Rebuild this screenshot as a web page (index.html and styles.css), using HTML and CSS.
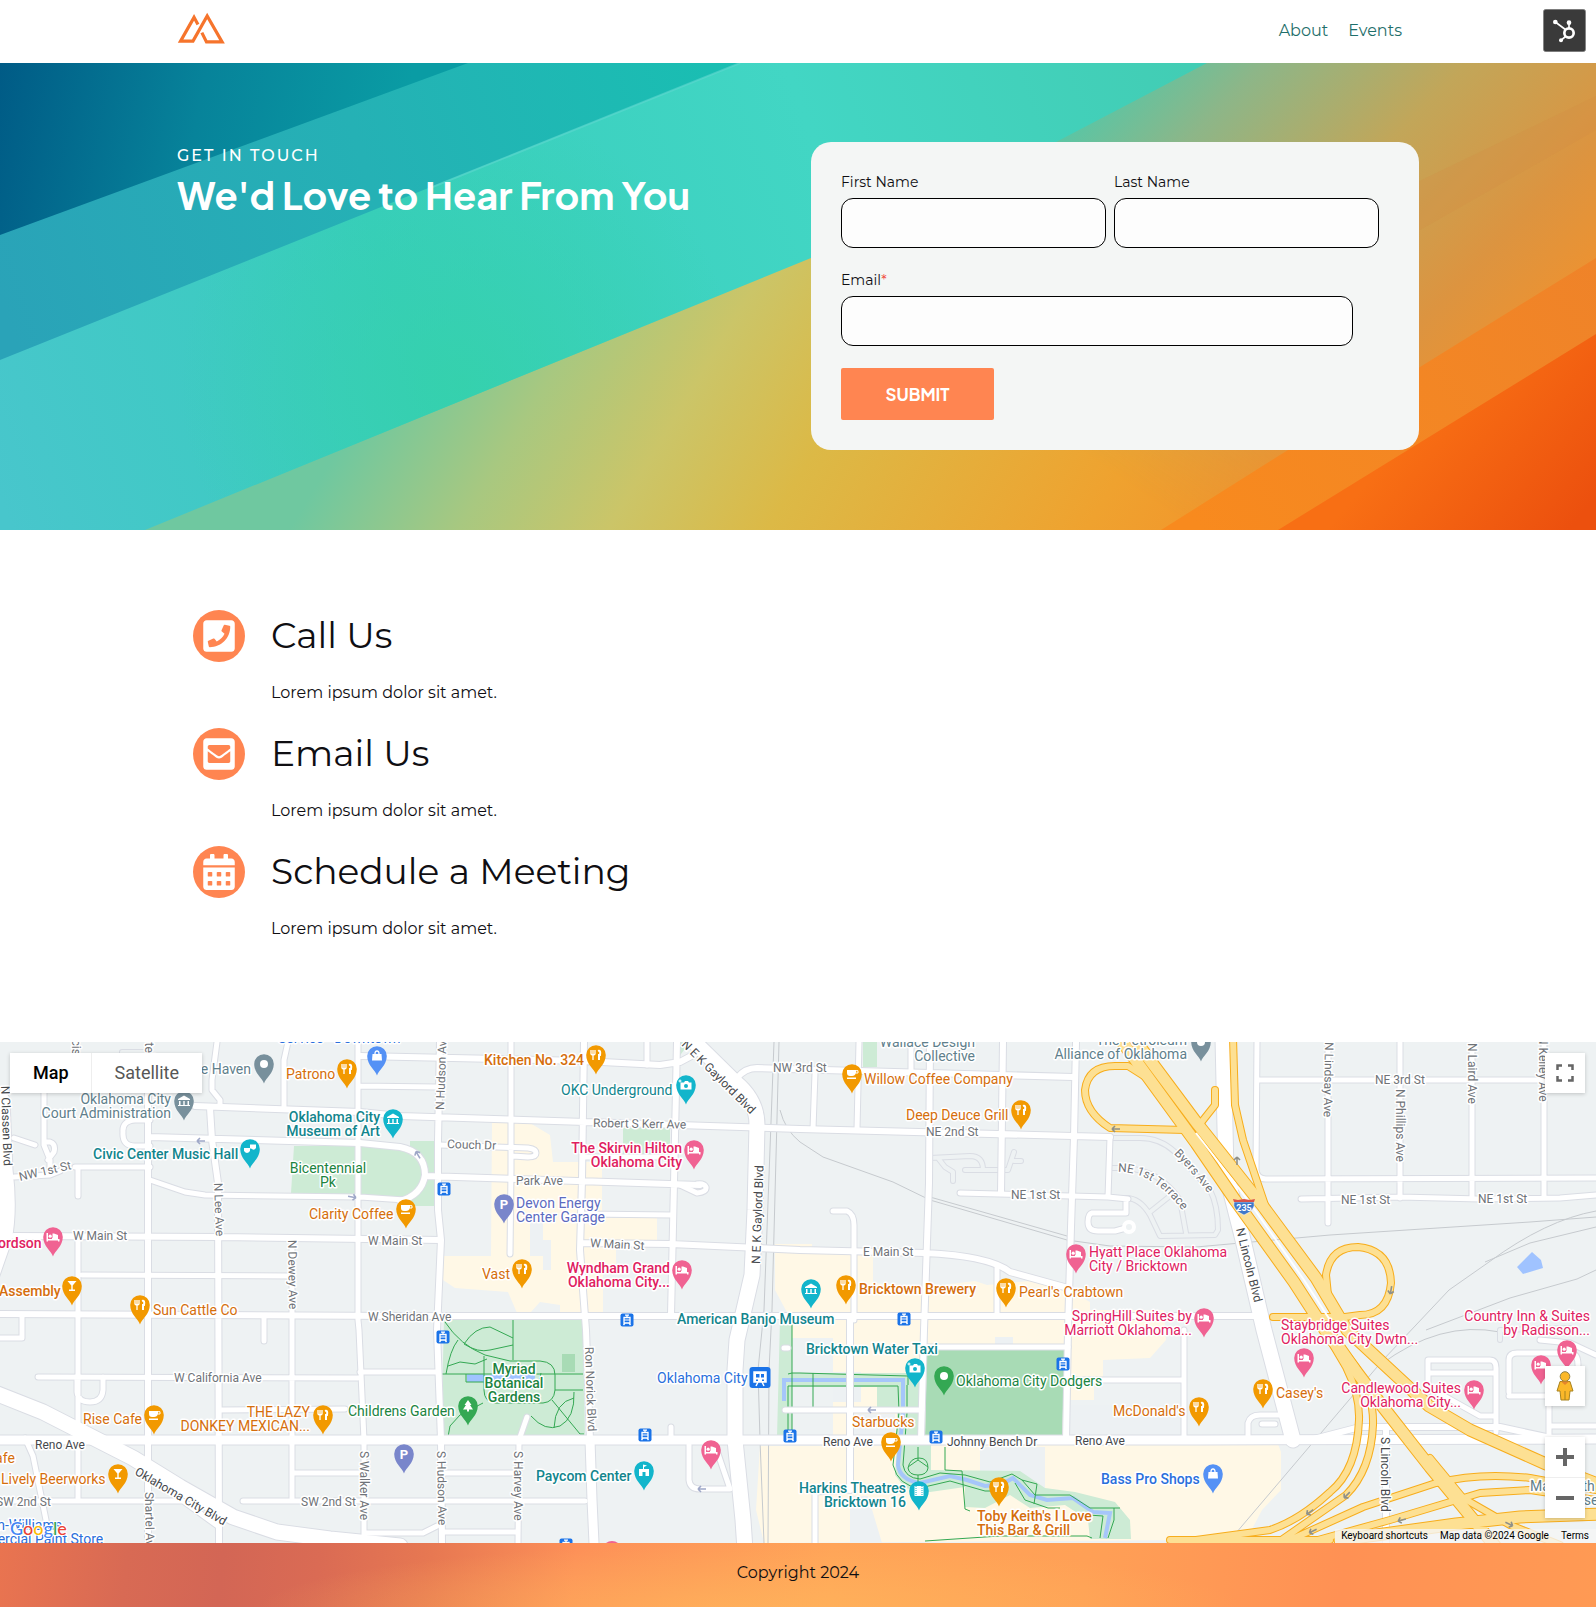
FILE: index.html
```html
<!DOCTYPE html>
<html lang="en">
<head>
<meta charset="utf-8">
<meta name="viewport" content="width=device-width, initial-scale=1">
<title>Contact</title>
<link rel="stylesheet" href="styles.css">
</head>
<body>
<header class="site-header">
  <div class="container header-row">
    <a class="logo" href="#" aria-label="Home">
      <svg width="49" height="34" viewBox="46 38 138 94"><path d="M105 75 94 55 56 122H91L131 51 173 124H129L116 98" fill="none" stroke="#f6742c" stroke-width="9"/></svg>
    </a>
    <nav class="nav"><a href="#">About</a><a href="#">Events</a></nav>
  </div>
  <button class="sprocket" type="button" aria-label="HubSpot menu">
    <svg width="43" height="43" viewBox="907 28 129 129"><rect x="908" y="29" width="127" height="127" rx="8" fill="#3a3a3a" stroke="#8c8c8c" stroke-width="2"/><g fill="none" stroke="#fff" stroke-width="5"><circle cx="985" cy="100" r="14" stroke-width="8"/><path d="M944 67 976 91M985 70V88M961 122 976 109"/></g><g fill="#fff"><circle cx="944" cy="67" r="7"/><circle cx="985" cy="69" r="7"/><circle cx="961" cy="122" r="6"/></g></svg>
  </button>
</header>

<main>
<section class="hero">
  <svg class="hero-art" viewBox="0 63 1596 467" preserveAspectRatio="none" aria-hidden="true">
    <defs>
      <linearGradient id="h3" gradientUnits="userSpaceOnUse" x1="500" y1="180" x2="1230" y2="620"><stop offset="0" stop-color="#6fc8a0"/><stop offset=".17" stop-color="#a8c880"/><stop offset=".32" stop-color="#cbc568"/><stop offset=".48" stop-color="#dcb946"/><stop offset=".8" stop-color="#efa22f"/><stop offset="1" stop-color="#f3912a"/></linearGradient>
      <linearGradient id="h3b" gradientUnits="userSpaceOnUse" x1="1130" y1="60" x2="1480" y2="400"><stop offset="0" stop-color="#58c6a6"/><stop offset=".2" stop-color="#8db688"/><stop offset=".5" stop-color="#c2a659"/><stop offset=".8" stop-color="#dc9440"/><stop offset="1" stop-color="#ee9230"/></linearGradient>
      <linearGradient id="h3m" gradientUnits="userSpaceOnUse" x1="1080" y1="450" x2="1220" y2="250"><stop offset="0" stop-color="#fff" stop-opacity="0"/><stop offset="1" stop-color="#fff"/></linearGradient>
      <mask id="hm" maskUnits="userSpaceOnUse" x="0" y="63" width="1596" height="467"><rect y="63" width="1596" height="467" fill="url(#h3m)"/></mask>
      <linearGradient id="h2" gradientUnits="userSpaceOnUse" x1="0" y1="500" x2="1190" y2="63"><stop offset="0" stop-color="#48c6cc"/><stop offset=".35" stop-color="#38cdbd"/><stop offset=".7" stop-color="#42d6c4"/><stop offset="1" stop-color="#42cdb4"/></linearGradient>
      <radialGradient id="h2g" gradientUnits="userSpaceOnUse" cx="460" cy="385" r="280"><stop offset="0" stop-color="#34d2a8" stop-opacity=".75"/><stop offset="1" stop-color="#34d2a8" stop-opacity="0"/></radialGradient>
      <linearGradient id="h1" gradientUnits="userSpaceOnUse" x1="0" y1="300" x2="740" y2="63"><stop offset="0" stop-color="#2aa3b8"/><stop offset=".5" stop-color="#25b1b5"/><stop offset="1" stop-color="#19bfb2"/></linearGradient>
      <linearGradient id="h0" gradientUnits="userSpaceOnUse" x1="0" y1="63" x2="400" y2="140"><stop offset="0" stop-color="#005b86"/><stop offset=".5" stop-color="#07839a"/><stop offset="1" stop-color="#0a9ca4"/></linearGradient>
      <linearGradient id="h4" gradientUnits="userSpaceOnUse" x1="1596" y1="260" x2="1200" y2="530"><stop offset="0" stop-color="#ef8329"/><stop offset="1" stop-color="#f88a1e"/></linearGradient>
      <linearGradient id="h5" gradientUnits="userSpaceOnUse" x1="1420" y1="420" x2="1560" y2="540"><stop offset="0" stop-color="#f86f14"/><stop offset="1" stop-color="#ec500e"/></linearGradient>
    </defs>
    <path d="M0 63H1596V530H0z" fill="url(#h3)"/>
    <path d="M0 63H1596V530H0z" fill="url(#h3b)" mask="url(#hm)"/>
    <path d="M1596 96 1380 200 1420 230 1596 130z" fill="#d48a44" opacity=".25"/>
    <path d="M0 63H1207L1056 142 811 258 480 393 145 530H0z" fill="url(#h2)"/>
    <path d="M0 63H1207L1056 142 811 258 480 393 145 530H0z" fill="url(#h2g)"/>
    <path d="M0 63H740L0 360z" fill="url(#h1)"/>
    <path d="M740 63 430 188" stroke="#5fd8d0" stroke-width="2" opacity=".6"/>
    <path d="M0 63H468L0 235z" fill="url(#h0)"/>
    <path d="M1161 530 1288 450 1420 367 1596 258V530z" fill="url(#h4)"/>
    <path d="M1278 530 1596 334V530z" fill="url(#h5)"/>
  </svg>
  <div class="container hero-grid">
    <div>
      <p class="eyebrow">GET IN TOUCH</p>
      <h1>We'd Love to Hear From You</h1>
    </div>
    <form class="card">
      <div class="name-row">
        <div class="field"><label for="first">First Name</label><input id="first" type="text"></div>
        <div class="field"><label for="last">Last Name</label><input id="last" type="text"></div>
      </div>
      <div class="field email"><label for="email">Email<span class="req">*</span></label><input id="email" type="email"></div>
      <button class="submit" type="submit">SUBMIT</button>
    </form>
  </div>
</section>

<section class="container contact">
  <article class="item">
    <span class="badge"><svg width="32" height="36" viewBox="0 0 448 512"><path fill="#fff" d="M400 32H48C21.49 32 0 53.49 0 80v352c0 26.51 21.49 48 48 48h352c26.51 0 48-21.49 48-48V80c0-26.51-21.49-48-48-48zM94 416c-7.033 0-13.057-4.873-14.616-11.627l-14.998-65a15 15 0 0 1 8.707-17.16l69.998-29.999a15 15 0 0 1 17.518 4.289l30.997 37.885c48.944-22.963 88.297-62.858 110.781-110.78l-37.886-30.997a15.001 15.001 0 0 1-4.289-17.518l30-69.998a15 15 0 0 1 17.16-8.707l65 14.998A14.997 14.997 0 0 1 384 126c0 160.292-129.945 290-290 290z"/></svg></span>
    <h2>Call Us</h2><p>Lorem ipsum dolor sit amet.</p>
  </article>
  <article class="item">
    <span class="badge"><svg width="32" height="36" viewBox="0 0 448 512"><path fill="#fff" d="M400 32H48C21.49 32 0 53.49 0 80v352c0 26.51 21.49 48 48 48h352c26.51 0 48-21.49 48-48V80c0-26.51-21.49-48-48-48zM178.117 262.104C87.429 196.287 88.353 196.121 64 177.167V152c0-13.255 10.745-24 24-24h272c13.255 0 24 10.745 24 24v25.167c-24.371 18.969-23.434 19.124-114.117 84.938-10.5 7.655-31.392 26.12-45.883 25.894-14.503.218-35.367-18.227-45.883-25.895zM384 217.775V360c0 13.255-10.745 24-24 24H88c-13.255 0-24-10.745-24-24V217.775c13.958 10.794 33.329 25.236 95.303 70.214 14.162 10.341 37.975 32.145 64.694 32.01 26.887.134 51.037-22.041 64.72-32.025 61.958-44.964 81.325-59.406 95.283-70.199z"/></svg></span>
    <h2>Email Us</h2><p>Lorem ipsum dolor sit amet.</p>
  </article>
  <article class="item">
    <span class="badge"><svg width="32" height="36" viewBox="0 0 448 512"><path fill="#fff" d="M0 464c0 26.500 21.500 48 48 48h352c26.500 0 48-21.500 48-48V192H0v272zM400 64h-48V16c0-8.800-7.200-16-16-16h-32c-8.800 0-16 7.200-16 16v48H160V16c0-8.800-7.200-16-16-16h-32c-8.800 0-16 7.200-16 16v48H48C21.500 64 0 85.500 0 112v48h448v-48c0-26.500-21.500-48-48-48z"/><g fill="#ff8551"><rect x="64" y="256" width="64" height="64" rx="12"/><rect x="192" y="256" width="64" height="64" rx="12"/><rect x="320" y="256" width="64" height="64" rx="12"/><rect x="64" y="384" width="64" height="64" rx="12"/><rect x="192" y="384" width="64" height="64" rx="12"/><rect x="320" y="384" width="64" height="64" rx="12"/></g></svg></span>
    <h2>Schedule a Meeting</h2><p>Lorem ipsum dolor sit amet.</p>
  </article>
</section>

<section class="map" aria-label="Map">
<svg class="map-canvas" viewBox="0 2 1596 501" preserveAspectRatio="xMidYMid slice">
  <defs>
    <path id="pin" d="M0 19.500C-1.500 14-9.800 9.500-9.800 0A9.800 9.800 0 0 1 9.800 0C9.800 9.500 1.500 14 0 19.500z"/>
    <g id="g-food" stroke="#fff" fill="none" stroke-width="1.300"><path d="M-5-5V-1Q-3 1-1-1V-5M-3-5V5"/><path d="M2-4Q5-5 4 0H3V5" stroke-width="2"/></g>
    <g id="g-bed" fill="#fff"><path d="M-6.500-4h1.500V2H5V-2L1-3.500H-.5V1H-1V3.500h-4V4.500h-1.500zM5 2h1.500V4.500H5zM-5 2H6v1.500H-5z"/><circle cx="-2.800" cy="-.8" r="1.600"/></g>
    <g id="g-cup"><path d="M-5-4H4V-1Q3 2 0 2H-2Q-5 2-5-1zM-5 3.500H4V5H-5z" fill="#fff"/><path d="M3-3.300H6V-1H4" fill="none" stroke="#fff"/></g>
    <g id="g-bar"><path d="M-4.500-5H4.500L.7-.5V3.500H3V5H-3V3.500H-.7V-.5z" fill="#fff"/></g>
    <g id="g-cam"><path d="M-5.500-2.500H-2L-1-4H2L3-2.500H5.500V4.500H-5.500z" fill="#fff"/><circle cy="1" r="2" fill="#12b5cb"/><path d="M-6-5.500v3M-7.500-4h3" stroke="#fff"/></g>
    <g id="g-mus" fill="#fff"><path d="M0-5.500 6-2V-1H-6V-2zM-5 0H-3.500V4H-5zM-.7 0H.7V4H-.7zM3.500 0H5V4H3.500zM-6 4H6V5H-6z"/></g>
    <g id="g-bag"><path d="M-4.500-2H4.500L5 4.500H-5z" fill="#fff"/><path d="M-2-2Q-2-5 0-5T2-2" fill="none" stroke="#fff" stroke-width="1.300"/></g>
    <g id="g-mask" fill="#fff"><path d="M-6-1H0V2Q-3 6-6 2zM0-4.500H6V-1Q4 2 1-.5H0z"/></g>
    <g id="g-tree" fill="#fff"><path d="M0-6 3.500-1H2L5 3.500H1V5.500H-1V3.500H-5L-2-1H-3.500z"/></g>
    <g id="g-film"><rect x="-4.500" y="-5" width="9" height="10" fill="#fff"/><path d="M-3-5V5M3-5V5" stroke="#12b5cb" stroke-dasharray="1 1"/></g>
    <g id="g-tower" fill="#fff"><path d="M-5-2H-1V-6.500L3-5.500 0-4V-2H5V5H1.500V1H-1.500V5H-5z"/></g>
    <g id="tram"><rect x="-6.500" y="-6.500" width="13" height="13" rx="2" fill="#1a73e8"/><path d="M-3-2.500H3V3H-3zM0-5V-2M-3.500 5-2 3M3.500 5 2 3M-2-4.800H2" fill="none" stroke="#fff" stroke-width="1.300"/><path d="M-3 0H3" stroke="#fff"/></g>
    <g id="arr"><path d="M-4 0H4M-4 0-1-3M-4 0-1 3" fill="none" stroke-width="1.600"/></g>

    <path id="r-minor" d="M1112 98H1140Q1160 98 1175 112L1210 150Q1218 165 1218 190L1215 195 1160 196 1150 175Q1140 158 1126 158M1110 128H1125Q1160 130 1180 160L1186 193M1150 172 1170 156M930 118 970 116Q983 116 983 130M965 130H1008L1014 112M938 118 945 127 953 132V141M1014 121h7M1500 300V290L1570 288M122 25V12H148"/>
    <path id="r-small" d="M44 50V105L50 120V130M44 102H50Q56 104 54 112L48 120M217 2 212 40V50L220 60V66M288 2 284 20V66M292 200V458M358 2V280L359 290 364 400V503M78 127V156M78 196V458M22 275V298H0M264 276V301M150 80H135Q122 81 123 92 122 106 135 106H150M75 127H150M14 137 50 135 60 131M150 140 185 152 205 155 360 157 405 160M82 235 292 236M38 337 358 338M77 337V352Q78 362 90 362 102 362 103 350V337M220 370 345 369M292 433H362M243 461H585M0 461H183L219 487M364 493H423L437 486M443 492H517M25 398 33 416 46 480 49 503M14 98 35 105M511 2V130L510 214M358 46 437 47M440 105 528 108Q536 109 536 113 536 117 528 117L513 116M585 117H674M585 174 672 175M680 145 697 153Q707 152 706 147 704 143 697 144M647 2V25M815 33 813 89M859 2 857 89M911 2V30M1110 97 1108 157M960 153 1108 157 1128 159M1126 159V173H1092Q1088 174 1088 182 1088 191 1098 191H1115L1126 188M833 171H847Q854 174 854 185V280M997 228V276M925 307H1068M1068 340H1184M785 370H922M1184 290V400M1257 2 1256 130Q1257 139 1266 139L1596 138M1258 40H1560M1328 2V183M1400 2V158M1472 2V158M1544 2V157M1301 159 1400 157 1480 159 1560 158 1596 155M1428 352V320H1490Q1496 320 1496 328V392M1428 333H1494M1428 347 1480 376H1496M1509 352V320Q1509 313 1517 313H1570Q1578 313 1578 325M1509 356H1545M1549 360V400M1549 386H1596M1540 300 1570 303 1596 315M1248 395V383Q1250 375 1260 375H1280M1262 384H1275M689 405V440Q690 449 700 449H730M715 405 730 449M671 387V400M527 377 519 400 518 503M443 433H517M815 503V452L848 450M784 308 788 308M360 332H437"/>
    <path id="r-mid" d="M148 20V503M210 68 212 100 218 143 219 503M195 66 360 72 400 76 800 89 1110 97M150 97 360 103 400 107Q425 112 425 135 422 155 400 161M14 196 220 197 441 200M0 274 400 276 1265 276M440 2 438 100V170L441 200 437 290 441 400 442 503M425 136 700 145M581 203 671 204 800 210 925 213Q990 216 1010 232L1068 248M584 2 582 140 580 210 586 290 590 400M677 2 674 143 671 275M360 16 583 21 660 25 680 22 695 14M737 38Q745 28 757 28L1073 37M930 2 929 143 924 290 921 400M1003 2 1001 153M1076 2 1074 97 1071 187 1068 290 1066 400M850 276V450M1310 400 1360 387H1500L1546 397M1386 388V503"/>
    <path id="r-big" d="M0 400H600L1200 400 1596 399M590 400 592 460 594 503"/>
    <path id="r-art" d="M-5 353 43 372 133 418 180 447 233 477 277 492 330 499 400 506M686-6 735 42Q757 60 757 85L755 170 752 235 737 300 735 330V400L743 480 745 510M1223-2 1226 133 1243 200 1264 290 1293 400M2 60 5 130Q10 170 4 200L-10 240"/>
    <path id="w5" d="M1185 90 1110 88Q1085 72 1085 50 1088 26 1115 26H1128L1150 40M1215 50V65L1200 84M1233-2 1235 65 1243 100 1265 165M1328 255 1326 235Q1330 207 1358 207 1390 210 1391 243 1388 275 1360 275L1345 277H1273M1320 283 1346 327Q1360 355 1359 380 1357 430 1330 452 1300 480 1270 490L1196 500M1330 290 1356 327Q1374 355 1373 385 1371 430 1346 455L1280 501M1290 500 1363 467 1436 443Q1480 432 1530 438L1596 450M1300 505 1390 480 1480 453 1530 450 1596 460M1430 418 1463 458 1510 485 1560 505M1170 500H1330"/>
    <path id="w10" d="M1118-4 1196 103 1235 160 1294 242 1325 290 1383 367 1430 427 1495 506M1132-4 1196 82 1262 165 1316 238 1347 290 1429 366 1470 390 1546 424 1600 445M1340 500 1456 484 1520 477 1600 474"/>
    <path id="terrace" d="M1118 132Q1152 131 1182 170"/>
    <path id="byers" d="M1174 114Q1192 132 1212 158"/>
  </defs>

  <rect y="2" width="1596" height="501" fill="#eef2f3"/>
  <g fill="#fff8e6">
    <path d="M492 83H530L550 95 553 122H602V178H657V200L616 204V230H603V272H560V265L540 262 530 273H517L508 252 455 248 443 240V216H491z"/>
    <path d="M775 204H812V213H873V243L925 247 975 241 987 245 1040 240 1068 250 1090 262V270H1164L1166 300 1150 318 1103 320V340L1094 342V360H1069V398H833V280L790 278 775 250z"/>
    <path d="M760 406 1278 404 1281 412V450L1262 470 1250 493 1196 500 764 503 756 470z"/>
    <path d="M792 280H833V298H792z"/>
  </g>
  <g fill="#edf1f3"><path d="M530 178H543V216H530zM543 200h8v30h-8zM980 407H1045V450H985L980 430zM850 456H868L882 503H850zM1069 365H1180V398H1069zM833 332h28v30h-28zM995 297h18v8h-18zM851 374h44v22h-44z"/></g>
  <g fill="#cdebd5"><path d="M294 106H410V101H436V166H405L400 158 291 153zM444 280H583L585 397H441zM623 88H670V116H623zM863 2H877V27H863zM678 2H690L678 18zM780 280H792V397H777zM792 333H905V347H792zM877 333H921V368H877zM897 372H921V397H897zM897 405H931V430L1020 431 1045 448 1075 452 1115 462 1130 480 1131 499H1090L1088 480 1065 465 1030 468 1010 455 985 468 965 467V447L930 452 905 448 895 435z"/></g>
  <path d="M927 310H1065L1062 397H925zM562 314h13v18h-13z" fill="#a8dbb5"/>
  <path d="M1517 227 1532 212 1541 220 1543 228 1523 234zM467 334h16v8h-16zM483 335h52v14h-14v-6h-38z" fill="#a0c3ff"/>
  <path d="M784 361V340H903V373L898 425Q900 440 920 443L950 436 967 440 985 446Q1003 445 1013 438L1030 455 1047 460 1073 458 1093 472 1110 473 1105 498" fill="none" stroke="#a6c6fa" stroke-width="4"/>
  <g class="trail"><path d="M445 282Q460 305 485 315L510 321H540Q555 322 555 335V350Q554 362 543 363H495Q484 362 484 350V316M442 334H583M555 350H583M458 300Q450 310 446 334M464 304Q475 287 490 287L513 298M464 304Q478 313 490 310L513 305M513 280V320M448 326 460 322 475 324 487 319M483 363 460 375 450 386 448 397M531 376Q545 392 560 386 575 378 574 352M552 360 580 394 584 394M554 388Q555 362 574 358M466 334V342H484M529 342Q540 345 541 333"/><path d="M792 281V397M788 334 792 333 800 333 908 336V345M788 397V346H898L899 372 893 425Q898 446 920 448L950 441 985 451H1000M813 333V368M907 345V373L903 425Q905 438 920 439L940 433 965 435 990 442 1012 434 1022 440 1035 455 1070 455 1090 468 1120 468M918 407V420M908 428Q910 418 919 418T928 428Q927 435 918 435T908 428M908 427 918 420 928 427M918 435V450M945 407V430L962 431 965 469 970 471M1022 440 1037 444 1034 464M1015 443 1025 460 1048 468 1060 468M1088 475 1103 476 1100 498M1114 468V480L1108 498M925 501 1000 496H1087L1092 498"/></g>

  <g class="rail"><path d="M780 70Q785 90 800 102L823 117 893 142 930 160 1067 200 1110 206 1196 207 1330 195 1530 182 1596 177M930 157 1067 196M774 2 764 270 758 330 760 400 764 503M779 2 772 270 769 330 768 503M1236 493 1383 320 1449 250 1489 222Q1546 180 1596 171M1426 290 1510 258 1577 239 1596 230M1485 222 1530 203 1596 187M1380 325Q1440 280 1500 292"/></g>

  <use href="#r-minor" class="case" stroke-width="6"/><use href="#r-minor" class="dull" stroke-width="4"/>
  <use href="#r-small" class="case" stroke-width="7"/><use href="#r-mid" class="case" stroke-width="8"/><use href="#r-big" class="case" stroke-width="11"/><use href="#r-art" class="case" stroke-width="17"/>
  <use href="#r-small" class="road" stroke-width="5"/><use href="#r-mid" class="road" stroke-width="6"/><use href="#r-big" class="road" stroke-width="9"/><use href="#r-art" class="road" stroke-width="15"/>
  <circle cx="1129" cy="187" r="5" fill="#eef2f3" stroke="#fff" stroke-width="4"/>
  <use href="#w5" class="hcase" stroke-width="8"/><use href="#w10" class="hcase" stroke-width="13"/><use href="#w5" class="hway" stroke-width="6"/><use href="#w10" class="hway" stroke-width="11"/>
  <path d="M1196 93 1250 163 1304 240 1330 280" fill="none" stroke="#fff" stroke-width="2"/>
  <g stroke="#9fa8c8"><use href="#arr" x="201" y="101"/><use href="#arr" transform="translate(352 157) rotate(190)"/><use href="#arr" transform="translate(418 115) rotate(60)"/><use href="#arr" x="702" y="449"/><use href="#arr" x="872" y="370"/></g>
  <g stroke="#8f9089"><use href="#arr" x="1116" y="89"/><use href="#arr" transform="translate(1237 121) rotate(90)"/><use href="#arr" transform="translate(1391 250) rotate(280)"/><use href="#arr" transform="translate(1310 472) rotate(-35)"/><use href="#arr" transform="translate(1347 455) rotate(-45)"/><use href="#arr" transform="translate(1313 491) rotate(-25)"/><use href="#arr" transform="translate(1402 480) rotate(-15)"/><use href="#arr" transform="translate(1509 484) rotate(205)"/></g>

  <g class="st">
    <text x="20" y="141" transform="rotate(-13 20 141)">NW 1st St</text>
    <text x="73" y="200">W Main St</text><text x="368" y="205">W Main St</text><text x="368" y="281">W Sheridan Ave</text><text x="174" y="342">W California Ave</text>
    <text x="-4" y="466">SW 2nd St</text><text x="301" y="466">SW 2nd St</text>
    <text x="447" y="108" transform="rotate(2 447 108)">Couch Dr</text><text x="516" y="145">Park Ave</text><text x="593" y="87" transform="rotate(1 593 87)">Robert S Kerr Ave</text><text x="590" y="207" transform="rotate(3 590 207)">W Main St</text>
    <text x="773" y="32">NW 3rd St</text><text x="926" y="96">NE 2nd St</text><text x="1011" y="159">NE 1st St</text><text x="863" y="216">E Main St</text>
    <text x="1375" y="44">NE 3rd St</text><text x="1341" y="164">NE 1st St</text><text x="1478" y="163">NE 1st St</text>
    <text><textPath href="#terrace">NE 1st Terrace</textPath></text><text><textPath href="#byers">Byers Ave</textPath></text>
    <text transform="translate(214 143) rotate(88)">N Lee Ave</text><text transform="translate(288 200) rotate(89)">N Dewey Ave</text><text transform="translate(444 70) rotate(-88)">N Hudson Ave</text>
    <text transform="translate(72 -24) rotate(90)">Francis</text><text transform="translate(145 -22) rotate(90)">Shartel</text><text transform="translate(145 452) rotate(89)">Shartel Ave</text>
    <text transform="translate(360 411) rotate(90)">S Walker Ave</text><text transform="translate(437 411) rotate(89)">S Hudson Ave</text><text transform="translate(514 411) rotate(90)">S Harvey Ave</text><text transform="translate(585 307) rotate(88)">Ron Norick Blvd</text>
    <text transform="translate(1325 2) rotate(91)">N Lindsay Ave</text><text transform="translate(1396 49) rotate(90)">N Phillips Ave</text><text transform="translate(1468 3) rotate(90)">N Laird Ave</text><text transform="translate(1539 -4) rotate(90)">N Kelley Ave</text>
  </g>
  <g class="st dark">
    <text transform="translate(1 46) rotate(88)">N Classen Blvd</text><text transform="translate(134 434) rotate(30)">Oklahoma City Blvd</text>
    <text transform="translate(681 5) rotate(45)">N E K Gaylord Blvd</text><text transform="translate(760 224) rotate(-88)">N E K Gaylord Blvd</text>
    <text transform="translate(1236 189) rotate(76)">N Lincoln Blvd</text><text transform="translate(1381 397) rotate(90)">S Lincoln Blvd</text>
    <text x="35" y="409">Reno Ave</text><text x="823" y="406">Reno Ave</text><text x="947" y="406">Johnny Bench Dr</text><text x="1075" y="405">Reno Ave</text>
  </g>

  <g class="poi food">
    <text x="286" y="39">Patrono</text><text class="b" x="484" y="25">Kitchen No. 324</text><text x="864" y="44">Willow Coffee Company</text><text x="906" y="80">Deep Deuce Grill</text><text x="309" y="179">Clarity Coffee</text><text x="482" y="239">Vast</text><text class="b" x="-1" y="256">Assembly</text><text x="153" y="275">Sun Cattle Co</text>
    <text class="b" x="859" y="254">Bricktown Brewery</text><text x="1019" y="257">Pearl's Crabtown</text><text x="83" y="384">Rise Cafe</text><text x="310" y="377" text-anchor="end">THE LAZY</text><text x="310" y="391" text-anchor="end">DONKEY MEXICAN...</text><text x="-14" y="423">Cafe</text><text x="1" y="444">Lively Beerworks</text>
    <text x="852" y="387">Starbucks</text><text class="b" x="977" y="481">Toby Keith's I Love</text><text class="b" x="977" y="495">This Bar &amp; Grill</text><text x="1113" y="376">McDonald's</text><text x="1276" y="358">Casey's</text>
  </g>
  <g class="poi hotel">
    <text class="b" x="-2" y="208">ordson</text><text class="b" x="682" y="113" text-anchor="end">The Skirvin Hilton</text><text class="b" x="682" y="127" text-anchor="end">Oklahoma City</text><text class="b" x="670" y="233" text-anchor="end">Wyndham Grand</text><text class="b" x="670" y="247" text-anchor="end">Oklahoma City...</text>
    <text x="1089" y="217">Hyatt Place Oklahoma</text><text x="1089" y="231">City / Bricktown</text><text x="1192" y="281" text-anchor="end">SpringHill Suites by</text><text x="1192" y="295" text-anchor="end">Marriott Oklahoma...</text>
    <text x="1281" y="290">Staybridge Suites</text><text x="1281" y="304">Oklahoma City Dwtn...</text><text x="1461" y="353" text-anchor="end">Candlewood Suites</text><text x="1461" y="367" text-anchor="end">Oklahoma City...</text><text x="1590" y="281" text-anchor="end">Country Inn &amp; Suites</text><text x="1590" y="295" text-anchor="end">by Radisson...</text>
  </g>
  <g class="poi teal">
    <text class="b" x="380" y="82" text-anchor="end">Oklahoma City</text><text class="b" x="380" y="96" text-anchor="end">Museum of Art</text><text class="b" x="93" y="119">Civic Center Music Hall</text><text x="561" y="55">OKC Underground</text><text class="b" x="677" y="284">American Banjo Museum</text><text class="b" x="806" y="314">Bricktown Water Taxi</text><text class="b" x="536" y="441">Paycom Center</text><text class="b" x="906" y="453" text-anchor="end">Harkins Theatres</text><text class="b" x="906" y="467" text-anchor="end">Bricktown 16</text>
  </g>
  <g class="poi gov">
    <text x="251" y="34" text-anchor="end">The Haven</text><text x="171" y="64" text-anchor="end">Oklahoma City</text><text x="171" y="78" text-anchor="end">Court Administration</text><text x="975" y="7" text-anchor="end">Wallace Design</text><text x="975" y="21" text-anchor="end">Collective</text><text x="1187" y="5" text-anchor="end">The Petroleum</text><text x="1187" y="19" text-anchor="end">Alliance of Oklahoma</text><text x="1530" y="451">Mammoth Market</text><text x="1558" y="465">House</text>
  </g>
  <g class="poi green">
    <text x="328" y="133" text-anchor="middle">Bicentennial</text><text x="328" y="147" text-anchor="middle">Pk</text><text class="b" x="514" y="334" text-anchor="middle">Myriad</text><text class="b" x="514" y="348" text-anchor="middle">Botanical</text><text class="b" x="514" y="362" text-anchor="middle">Gardens</text><text x="348" y="376">Childrens Garden</text><text x="956" y="346">Oklahoma City Dodgers</text>
  </g>
  <g class="poi park"><text x="516" y="168">Devon Energy</text><text x="516" y="182">Center Garage</text></g>
  <g class="poi shop"><text x="278" y="3">Service - Downtown</text><text x="657" y="343">Oklahoma City</text><text class="b" x="1101" y="444">Bass Pro Shops</text><text x="-45" y="490">Sherwin-Williams</text><text x="-44" y="504">Commercial Paint Store</text></g>

  <g fill="#f29900"><use href="#pin" x="347" y="29"/><use href="#pin" x="596" y="15"/><use href="#pin" x="852" y="34"/><use href="#pin" x="1021" y="70"/><use href="#pin" x="406" y="169"/><use href="#pin" x="522" y="229"/><use href="#pin" x="72" y="246"/><use href="#pin" x="140" y="265"/><use href="#pin" x="846" y="245"/><use href="#pin" x="1006" y="248"/><use href="#pin" x="154" y="375"/><use href="#pin" x="323" y="375"/><use href="#pin" x="118" y="434"/><use href="#pin" x="891" y="402"/><use href="#pin" x="999" y="447"/><use href="#pin" x="1199" y="367"/><use href="#pin" x="1263" y="349"/></g>
  <use href="#g-food" x="347" y="29"/><use href="#g-food" x="596" y="15"/><use href="#g-cup" x="852" y="34"/><use href="#g-food" x="1021" y="70"/><use href="#g-cup" x="406" y="169"/><use href="#g-food" x="522" y="229"/><use href="#g-bar" x="72" y="246"/><use href="#g-food" x="140" y="265"/><use href="#g-food" x="846" y="245"/><use href="#g-food" x="1006" y="248"/><use href="#g-cup" x="154" y="375"/><use href="#g-food" x="323" y="375"/><use href="#g-bar" x="118" y="434"/><use href="#g-cup" x="891" y="402"/><use href="#g-food" x="999" y="447"/><use href="#g-food" x="1199" y="367"/><use href="#g-food" x="1263" y="349"/>
  <g fill="#f06292"><use href="#pin" x="53" y="197"/><use href="#pin" x="694" y="110"/><use href="#pin" x="682" y="230"/><use href="#pin" x="1076" y="214"/><use href="#pin" x="1204" y="278"/><use href="#pin" x="1304" y="318"/><use href="#pin" x="1474" y="350"/><use href="#pin" x="1541" y="325"/><use href="#pin" x="1567" y="310"/><use href="#pin" x="711" y="410"/><circle cx="612" cy="511" r="10"/></g>
  <use href="#g-bed" x="53" y="197"/><use href="#g-bed" x="694" y="110"/><use href="#g-bed" x="682" y="230"/><use href="#g-bed" x="1076" y="214"/><use href="#g-bed" x="1204" y="278"/><use href="#g-bed" x="1304" y="318"/><use href="#g-bed" x="1474" y="350"/><use href="#g-bed" x="1541" y="325"/><use href="#g-bed" x="1567" y="310"/><use href="#g-bed" x="711" y="410"/>
  <g fill="#12b5cb"><use href="#pin" x="393" y="79"/><use href="#pin" x="250" y="109"/><use href="#pin" x="686" y="45"/><use href="#pin" x="811" y="249"/><use href="#pin" x="915" y="328"/><use href="#pin" x="644" y="431"/><use href="#pin" x="919" y="451"/></g>
  <use href="#g-mus" x="393" y="79"/><use href="#g-mask" x="250" y="109"/><use href="#g-cam" x="686" y="45"/><use href="#g-mus" x="811" y="249"/><use href="#g-cam" x="915" y="328"/><use href="#g-tower" x="644" y="431"/><use href="#g-film" x="919" y="451"/>
  <g fill="#78909c"><use href="#pin" x="264" y="24"/><use href="#pin" x="184" y="61"/><use href="#pin" x="1201" y="2"/></g><use href="#g-mus" x="184" y="61"/><g fill="#fff"><circle cx="264" cy="24" r="4"/><circle cx="1201" cy="2" r="4"/></g>
  <g fill="#34a853"><use href="#pin" x="468" y="366"/><use href="#pin" x="944" y="336"/></g><use href="#g-tree" x="468" y="366"/><circle cx="944" cy="336" r="4" fill="#fff"/>
  <g fill="#7986cb"><use href="#pin" x="504" y="164"/><use href="#pin" x="404" y="414"/></g><g class="pk"><text x="504" y="169">P</text><text x="404" y="419">P</text></g>
  <g fill="#5491f5"><use href="#pin" x="377" y="16"/><use href="#pin" x="1213" y="434"/></g><use href="#g-bag" x="377" y="16"/><use href="#g-bag" x="1213" y="434"/>
  <use href="#tram" x="444" y="149"/><use href="#tram" x="627" y="280"/><use href="#tram" x="904" y="279"/><use href="#tram" x="443" y="297"/><use href="#tram" x="645" y="395"/><use href="#tram" x="790" y="396"/><use href="#tram" x="936" y="397"/><use href="#tram" x="1063" y="324"/><use href="#tram" x="566" y="505"/>
  <rect x="749.500" y="327" width="21" height="21" rx="3" fill="#1a73e8"/><path d="M754 332H766V342H754zM756 346 758 342M764 346 762 342" fill="#fff" stroke="#fff" stroke-width="1.500"/><path d="M756 334H759.500V337.500H756zM761 334H764V337.500H761zM756 339.500h2v1.500h-2zM762 339.500h2v1.500h-2z" fill="#1a73e8"/>
  <path d="M1234 162H1254Q1256 170 1244 175 1232 170 1234 162z" fill="#3f78c9" stroke="#fff" stroke-width=".5"/><path d="M1234 162 1233 159 1238 160 1244 159 1250 160 1255 159 1254 162z" fill="#d9534a"/><text class="shield" x="1244" y="171">235</text>
  <text class="google" x="10" y="495"><tspan fill="#4285f4">G</tspan><tspan fill="#ea4335">o</tspan><tspan fill="#fbbc05">o</tspan><tspan fill="#4285f4">g</tspan><tspan fill="#34a853">l</tspan><tspan fill="#ea4335">e</tspan></text>
</svg>
  <div class="map-type"><button type="button" class="on">Map</button><button type="button">Satellite</button></div>
  <button class="ctl full" type="button" aria-label="Toggle fullscreen"><svg width="18" height="18" viewBox="0 0 18 18"><path d="M1.500 6V1.500H6M12 1.500H16.500V6M16.500 12V16.500H12M6 16.500H1.500V12" fill="none" stroke="#666" stroke-width="2.500"/></svg></button>
  <div class="map-side">
    <button class="ctl" type="button" aria-label="Street View"><svg width="18" height="30" viewBox="0 0 18 30"><path d="M4 10.500H14L17 20H14L13 29H5L4 20H1z" fill="#fbb829" stroke="#a8831f"/><circle cx="9" cy="5.500" r="4.800" fill="#fbb829" stroke="#8f8049"/><path d="M5 10.500H13L9 14z" fill="#e5852b"/><path d="M9 20V29" stroke="#a8831f"/></svg></button>
    <div class="zoom"><button class="ctl" type="button" aria-label="Zoom in"><svg width="18" height="18" viewBox="0 0 18 18"><path d="M0 9H18M9 0V18" stroke="#666" stroke-width="4"/></svg></button><button class="ctl" type="button" aria-label="Zoom out"><svg width="18" height="18" viewBox="0 0 18 18"><path d="M0 9H18" stroke="#666" stroke-width="4"/></svg></button></div>
  </div>
  <div class="legal"><button type="button">Keyboard shortcuts</button><span>Map data ©2024 Google</span><a href="#">Terms</a></div>
</section>
</main>
<footer class="site-footer">Copyright 2024</footer>
</body>
</html>
```
FILE: styles.css
```css
* { box-sizing: border-box; }
body { margin: 0; background: #fff; color: #0f0e12; font: 16px/24px Montserrat, Inter, "Open Sans", sans-serif; }
h1, h2, p { margin: 0; }
button { font: inherit; border: 0; padding: 0; margin: 0; background: none; cursor: pointer; }
svg { display: block; }
.container { width: 100%; max-width: 1242px; margin: 0 auto; }

.site-header { position: relative; height: 63px; }
.header-row { display: flex; justify-content: space-between; align-items: flex-start; padding-right: 17px; }
.logo { margin-top: 11px; }
.nav { display: flex; gap: 20px; padding-top: 19px; }
.nav a { color: #1f6f6b; text-decoration: none; }
.sprocket { position: absolute; top: 9px; right: 10px; }

.hero { position: relative; padding: 79px 0 80px; overflow: hidden; }
.hero-art { position: absolute; inset: 0; width: 100%; height: 100%; }
.hero-grid { position: relative; display: grid; grid-template-columns: 1fr 1fr; gap: 26px; color: #fff; }
.eyebrow { padding-top: 2px; font-weight: 500; letter-spacing: 2px; }
h1 { font: 700 38px/54px "Plus Jakarta Sans", Inter, sans-serif; }
.card { background: #f4f6f5; color: #0f0e12; border-radius: 20px; padding: 28px 30px 30px; }
.name-row { display: flex; gap: 8px; padding-right: 10px; }
.name-row .field { flex: 1; }
.field label { display: block; font-size: 14px; line-height: 24px; margin-bottom: 4px; }
.field input { display: block; width: 100%; height: 50px; background: #fdfdfd; border: 1px solid #000; border-radius: 12px; padding: 0 12px; font: inherit; }
.email { width: 512px; max-width: 100%; margin: 20px 0 22px; }
.req { color: #f04a3e; }
.submit { width: 153px; height: 52px; background: #ff8551; color: #fff; border-radius: 2px; font: 700 17px/24px "Plus Jakarta Sans", Inter, sans-serif; }

.contact { padding: 80px 16px 78px; }
.item { display: grid; grid-template-columns: 52px 1fr; column-gap: 26px; height: 118px; align-content: start; }
.badge { width: 52px; height: 52px; border-radius: 50%; background: #ff8551; display: grid; place-items: center; }
.item h2 { font-weight: 400; font-size: 36px; line-height: 50px; }
.item p { grid-column: 2; margin-top: 19px; }

.map { position: relative; height: 501px; overflow: hidden; font-family: Roboto, sans-serif; }
.map-canvas { width: 100%; height: 100%; }
.case, .dull, .road, .hcase, .hway { fill: none; stroke-linecap: round; stroke-linejoin: round; }
.case { stroke: #dadde4; }
.dull { stroke: #eef2f3; }
.road { stroke: #fff; }
.hcase { stroke: #f7ad1c; }
.hway { stroke: #fde093; }
.rail { fill: none; stroke: #c6cace; }
.trail { fill: none; stroke: #34a853; }
.map-canvas text { paint-order: stroke; stroke: #fff; stroke-width: 3px; stroke-linejoin: round; }
.st text { font-size: 12px; fill: #6f7378; }
.dark text { fill: #45484c; }
.poi text { font-size: 14px; }
.map-canvas .b { font-weight: 500; }
.food { fill: #d56e0c; }
.hotel { fill: #e0215f; }
.teal { fill: #12858d; }
.gov { fill: #5f7f8c; }
.green { fill: #20843f; }
.park { fill: #5c6bc0; }
.shop { fill: #2a6fdc; }
.pk text, .map-canvas .shield { stroke: none; fill: #fff; text-anchor: middle; font-weight: 700; }
.pk text { font-size: 13px; }
.map-canvas .shield { font-size: 9px; }
.map-canvas .google { font: 500 18px Lato, sans-serif; stroke-width: 2px; }

.map-type { position: absolute; left: 10px; top: 11px; display: flex; height: 40px; background: #fff; box-shadow: 0 1px 4px rgba(0, 0, 0, .2); }
.map-type button { padding: 0 23px; font-size: 18px; color: #565656; }
.map-type .on { padding-right: 22px; color: #000; font-weight: 500; border-right: 1px solid #eee; }
.ctl { width: 40px; height: 40px; display: grid; place-items: center; background: #fff; box-shadow: 0 1px 4px rgba(0, 0, 0, .2); }
.full { position: absolute; right: 11px; top: 11px; }
.map-side { position: absolute; right: 11px; bottom: 25px; display: grid; gap: 31px; }
.zoom { display: grid; gap: 1px; background: #eee; box-shadow: 0 1px 4px rgba(0, 0, 0, .2); }
.zoom .ctl { box-shadow: none; }
.legal { position: absolute; right: 0; bottom: 0; display: flex; font-size: 10px; line-height: 14px; background: rgba(245, 245, 245, .8); color: #000; }
.legal > * { padding: 0 6px; color: #000; text-decoration: none; }
.legal > :last-child { padding-right: 7px; }

.site-footer { padding: 18px 0 22px; text-align: center; background: radial-gradient(ellipse 500px 70px at 47% 110%, rgba(255, 184, 92, .7), transparent), linear-gradient(96deg, #e97450 0, #d86a54 8%, #d36655 14%, #da6b54 20%, #e77852 27%, #fd9058 36%, #ffa458 52%, #ffa056 68%, #ff9154 84%, #ff9a54 100%); }
```
